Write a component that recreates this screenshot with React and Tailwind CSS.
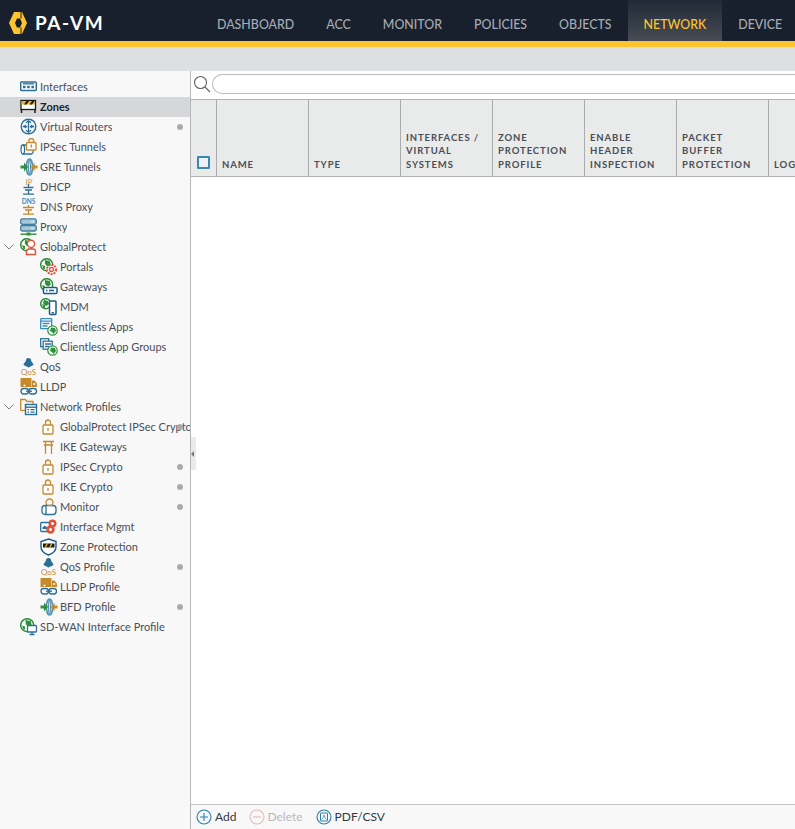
import React from "react";

const B = "#2b6f97", O = "#c8892b", G = "#2f8f3c", R = "#e0523a";
const S = ({ children }) => (
  <svg width="18" height="18" viewBox="0 0 18 18" fill="none" strokeWidth="1.3" className="shrink-0">{children}</svg>
);
const Globe = ({ r = 5.500 }) => (
  <g>
    <circle cx={r + 0.700} cy={r + 0.700} r={r} fill="#fff" stroke={G} strokeWidth="1.500" />
    <path d={`M${r - 1} 2l${r * 0.8} 1 1 ${r * 0.6}-2.500 2-2-1-1.500-2z`} fill={G} />
    <path d={`M2 ${r + 1}l3 1v3l-1.500 0z`} fill={G} />
  </g>
);
const MiniGlobe = () => (
  <g>
    <circle cx="12.500" cy="12.500" r="4.700" fill="#fff" stroke={G} strokeWidth="1.200" />
    <path d="M11 9.500l4 .5 1 3-2.500 3-1.500-2-2-1z" fill={G} />
  </g>
);
const Lock = () => (
  <S>
    <rect x="3" y="7" width="10" height="9" rx="1" stroke={O} fill="#fff" />
    <path d="M5.500 7V4.500a2.500 2.500 0 0 1 5 0V7" stroke={O} />
    <rect x="7.300" y="10" width="1.400" height="2.800" fill={O} />
  </S>
);
const Truck = () => (
  <S>
    <rect x="0.500" y="0" width="11" height="9" rx="0.500" fill={O} />
    <path d="M12 2.500h2.500L17 5.500v3.500h-5z" fill={O} />
    <circle cx="14.200" cy="6" r="1.100" fill="#fff" />
    <circle cx="4.500" cy="7.500" r="1" fill="#fff" />
    <rect x="1" y="10.500" width="7.500" height="5.500" rx="2.700" stroke={B} />
    <rect x="9" y="10.500" width="7.500" height="5.500" rx="2.700" stroke={B} />
    <path d="M6 13.200h6" stroke={B} />
  </S>
);
const Qos = () => (
  <S>
    <path d="M8.500 0a2.600 2.600 0 0 1 2.600 2.600c0 1.400 2.400 2.600 2.400 4.400L8.500 9.500 3.500 7c0-1.800 2.400-3 2.400-4.400A2.600 2.600 0 0 1 8.500 0z" fill={B} />
    <text x="8.500" y="16.500" textAnchor="middle" fontSize="8" fill={O} fontFamily="Lato" fontWeight="400">QoS</text>
  </S>
);
const Bfd = () => (
  <S>
    <ellipse cx="9.500" cy="9" rx="3" ry="8" stroke="#4b93b5" strokeWidth="1.500" fill="#e9f3f6" />
    <ellipse cx="9.500" cy="9" rx="1" ry="7" stroke={B} strokeWidth="0.800" />
    <path d="M0.500 7.600h3.500V4.500L8 9l-4 4.500v-3.100H0.500z" fill={G} />
    <path d="M17.500 7.600h-3V4.500L11 9l3.500 4.500v-3.100h3z" fill={O} />
  </S>
);

const icons = {
  interfaces: (
    <S>
      <rect x="0.700" y="4" width="15.600" height="8.500" rx="1" stroke={B} fill="#fff" strokeWidth="1.500" />
      <path d="M3 5.800h11" stroke={B} />
      <path d="M3 7.800h2.500v2.500H3zM7.200 7.800h2.500v2.500H7.200zM11.400 7.800h2.500v2.500h-2.500z" fill={B} />
    </S>
  ),
  zones: (
    <S>
      <rect x="1" y="2.500" width="14.500" height="9" fill="#fff" stroke="#1b1b1b" strokeWidth="1.300" />
      <rect x="1.500" y="3" width="13.500" height="3.500" fill="#e8b52a" />
      <path d="M4 6.500L6.500 3h2.500L6.500 6.500zM9.500 6.500L12 3h2.500L12 6.500z" fill="#1b1b1b" />
      <path d="M1.500 11v4M15 11v4" stroke="#1b1b1b" strokeWidth="1.500" />
    </S>
  ),
  router: (
    <S>
      <circle cx="8.500" cy="8.500" r="7.300" stroke={B} strokeWidth="1.400" />
      <path d="M8.500 2.800v11.400M6 4.800l2.500-2 2.500 2M6 12.200l2.500 2 2.500-2" stroke={B} />
      <path d="M2.800 8.500h3.500l-1.500-1.500M14.200 8.500h-3.500l1.500-1.500M6.300 8.500l-1.500 1.500M10.700 8.500l1.500 1.500" stroke={B} />
    </S>
  ),
  ipsec: (
    <S>
      <ellipse cx="2.800" cy="11.500" rx="1.800" ry="4.500" stroke={B} fill="#fff" />
      <path d="M2.800 7h9M2.800 16h9a2 4 0 0 0 1.500-3.500" stroke={B} />
      <rect x="6.500" y="4.500" width="9.500" height="7.500" rx="1" stroke={O} fill="#fff" />
      <path d="M8.800 4.500V3a2.500 2.500 0 0 1 5 0v1.500" stroke={O} />
      <rect x="10.600" y="6.500" width="1.500" height="3" fill={O} />
    </S>
  ),
  gre: <Bfd />,
  dhcp: (
    <S>
      <text x="9" y="6.500" textAnchor="middle" fontSize="7.500" fill="#d8a968" fontFamily="Lato" fontWeight="700">IP</text>
      <path d="M8.500 6v3.500M3.500 9.500h10M5 12h7M8.500 12v4M3 16.200h11" stroke={B} />
    </S>
  ),
  dns: (
    <S>
      <text x="8.500" y="6" textAnchor="middle" fontSize="6.500" fill="#3a8cbf" fontFamily="Lato" fontWeight="700">DNS</text>
      <path d="M8.500 7v2.500M3 9.500h11M5 12h7M8.500 12v4M3 16.200h11" stroke={O} />
    </S>
  ),
  proxy: (
    <S>
      <rect x="0.700" y="0.800" width="15.600" height="5.500" rx="1.800" fill="#a9c7d6" stroke="#3f7f9f" />
      <rect x="0.700" y="7.500" width="15.600" height="5.500" rx="1.800" fill="#a9c7d6" stroke="#3f7f9f" />
      <path d="M0.500 16.200h16" stroke={G} strokeWidth="1.400" />
      <rect x="6.500" y="14.500" width="4" height="3" fill={G} />
      <path d="M11 3.500h3M11 10h3" stroke="#d8e6ec" />
    </S>
  ),
  gp: (
    <S>
      <Globe r={6} />
      <circle cx="11" cy="5.800" r="3.600" stroke={R} strokeWidth="1.400" fill="#fff" />
      <path d="M6.500 16.500v-3a2.500 2.500 0 0 1 2.500-2.500h4a2.500 2.500 0 0 1 2.500 2.500v3z" stroke={R} strokeWidth="1.400" fill="#fff" />
    </S>
  ),
  portals: (
    <S>
      <Globe r={6} />
      <circle cx="11.500" cy="11.500" r="4.600" stroke={R} strokeWidth="2" strokeDasharray="2 1" fill="#fff" />
      <circle cx="11.500" cy="11.500" r="2" stroke={R} />
    </S>
  ),
  gateways: (
    <S>
      <Globe r={6} />
      <rect x="3.500" y="9.500" width="13.500" height="6" rx="1" stroke="#1d5c86" strokeWidth="1.500" fill="#fff" />
      <path d="M6 12.500h1.500M9 12.500h5" stroke="#1d5c86" strokeWidth="1.500" />
    </S>
  ),
  mdm: (
    <S>
      <Globe r={5} />
      <rect x="9.500" y="3" width="6.500" height="13.500" rx="1" stroke="#1d5c86" strokeWidth="1.500" fill="#fff" />
      <path d="M11.500 14.800h2.500" stroke="#1d5c86" />
    </S>
  ),
  apps: (
    <S>
      <rect x="0.700" y="0.700" width="11" height="10" rx="0.500" stroke="#3a8cbf" fill="#fff" />
      <path d="M0.700 3.200h11M2.500 5.500h7M2.500 8h5" stroke="#3a8cbf" />
      <MiniGlobe />
    </S>
  ),
  groups: (
    <S>
      <rect x="0.700" y="0.700" width="8" height="8" stroke={B} fill="#fff" />
      <rect x="3.200" y="3.200" width="9" height="8" stroke={B} fill="#fff" />
      <path d="M5 6h6M5 8.500h4" stroke={B} />
      <MiniGlobe />
    </S>
  ),
  np: (
    <S>
      <path d="M0.700 12.500V1.500h4.500l1.800 2h6v3" stroke={O} />
      <path d="M0.700 12.500H5" stroke={O} />
      <rect x="5.500" y="6.500" width="11" height="10" stroke={B} fill="#fff" strokeWidth="1.400" />
      <path d="M5.500 9.200h11" stroke={B} strokeWidth="1.400" />
      <path d="M7.500 11.700h1.500M10.500 11.700h4M7.500 14.200h1.500M10.500 14.200h4" stroke={B} />
    </S>
  ),
  lock: <Lock />,
  ike: (
    <S>
      <path d="M3 3.500h11M4 7h9M5.500 3.500V16M11.500 3.500V16" stroke={O} />
    </S>
  ),
  monitor: (
    <S>
      <circle cx="9.500" cy="4.500" r="3.500" stroke={O} />
      <rect x="2" y="7.500" width="14" height="9" rx="3" stroke={B} fill="#fff" />
      <path d="M6 7.500v9" stroke={B} />
      <path d="M7 7.500h5.500" stroke={O} />
    </S>
  ),
  mgmt: (
    <S>
      <rect x="0.700" y="4.500" width="9" height="9" rx="1" stroke={B} fill="#fff" />
      <path d="M2.500 11h4.500V9.500L4.700 7.500 2.500 9.500z" fill={B} />
      <circle cx="12.500" cy="5.500" r="4" fill={R} />
      <circle cx="10.500" cy="11.500" r="4.200" fill={R} />
      <circle cx="12.500" cy="5.500" r="1.500" fill="#fff" />
      <circle cx="10.500" cy="11.500" r="1.500" fill="#fff" />
    </S>
  ),
  zp: (
    <S>
      <path d="M8.500 1l7.500 2.500V9c0 4-3.500 6.500-7.500 8-4-1.500-7.500-4-7.500-8V3.500z" stroke="#1d5c86" strokeWidth="1.400" fill="#fff" />
      <rect x="3" y="5.500" width="11.500" height="4" fill="#1b1b1b" />
      <path d="M4.500 9.500l2-4H8l-2 4zM9 9.500l2-4h1.500l-2 4z" fill="#e8b52a" />
    </S>
  ),
  qos: <Qos />,
  truck: <Truck />,
  sdwan: (
    <S>
      <Globe r={6.500} />
      <rect x="7.500" y="7.500" width="9" height="6.500" rx="1" stroke={B} fill="#fff" />
      <path d="M12 14v2M9.500 16.500h5" stroke={B} />
    </S>
  ),
};

const tree = [
  { l: "Interfaces", i: "interfaces" },
  { l: "Zones", i: "zones", sel: true },
  { l: "Virtual Routers", i: "router", dot: true },
  { l: "IPSec Tunnels", i: "ipsec" },
  { l: "GRE Tunnels", i: "gre" },
  { l: "DHCP", i: "dhcp" },
  { l: "DNS Proxy", i: "dns" },
  { l: "Proxy", i: "proxy" },
  { l: "GlobalProtect", i: "gp", open: true },
  { l: "Portals", i: "portals", c: true },
  { l: "Gateways", i: "gateways", c: true },
  { l: "MDM", i: "mdm", c: true },
  { l: "Clientless Apps", i: "apps", c: true },
  { l: "Clientless App Groups", i: "groups", c: true },
  { l: "QoS", i: "qos" },
  { l: "LLDP", i: "truck" },
  { l: "Network Profiles", i: "np", open: true },
  { l: "GlobalProtect IPSec Crypto", i: "lock", c: true, dot: true },
  { l: "IKE Gateways", i: "ike", c: true },
  { l: "IPSec Crypto", i: "lock", c: true, dot: true },
  { l: "IKE Crypto", i: "lock", c: true, dot: true },
  { l: "Monitor", i: "monitor", c: true, dot: true },
  { l: "Interface Mgmt", i: "mgmt", c: true },
  { l: "Zone Protection", i: "zp", c: true },
  { l: "QoS Profile", i: "qos", c: true, dot: true },
  { l: "LLDP Profile", i: "truck", c: true },
  { l: "BFD Profile", i: "gre", c: true, dot: true },
  { l: "SD-WAN Interface Profile", i: "sdwan" },
];

const tabs = ["DASHBOARD", "ACC", "MONITOR", "POLICIES", "OBJECTS", "NETWORK", "DEVICE"];

const cols = [
  ["NAME"],
  ["TYPE"],
  ["INTERFACES /", "VIRTUAL", "SYSTEMS"],
  ["ZONE", "PROTECTION", "PROFILE"],
  ["ENABLE", "HEADER", "INSPECTION"],
  ["PACKET", "BUFFER", "PROTECTION"],
  ["LOG SETTING"],
];

function Row({ l, i, sel, dot, c, open }) {
  return (
    <div className={`relative flex h-5 items-center whitespace-nowrap ${c ? "pl-[40px]" : "pl-[20px]"} ${sel ? "bg-[#d6d7d8]" : ""}`}>
      {open && (
        <svg width="10" height="6" viewBox="0 0 10 6" fill="none" className="absolute left-[4px] top-[7px]">
          <path d="M0.500 0.500L5 5l4.500-4.500" stroke="#7a7f85" strokeWidth="1" />
        </svg>
      )}
      {icons[i]}
      <span className={`ml-[2px] overflow-hidden text-[11px] leading-5 ${sel ? "font-bold text-[#1c2430]" : "text-[#4a4f57]"} ${c ? "w-[130px]" : ""}`}>{l}</span>
      {dot && <span className="absolute left-[177px] top-[7px] h-[6px] w-[6px] rounded-full bg-[#a9abae]" />}
    </div>
  );
}

export default function App() {
  return (
    <div className="flex h-[829px] w-[795px] flex-col overflow-hidden bg-white font-['Lato',sans-serif]">
      <header className="flex h-[41px] shrink-0 items-stretch bg-[#18202d]">
        <div className="flex w-[201px] shrink-0 items-center pl-[9px] pt-[4px]">
          <svg width="18" height="22" viewBox="0 0 18 22" className="mr-[8px]">
            <path d="M5 0h8l5 11-5 11H5L0 11z" fill="#fec42f" />
            <path d="M8 6.500h3L13 11l-2 4.500H8L6 11z" fill="#18202d" />
            <path d="M11.500 0h1v6.500h-1zM11.500 15.500h1V22h-1z" fill="#18202d" />
          </svg>
          <span className="text-[19px] font-bold leading-none tracking-[1.500px] text-white">PA-VM</span>
        </div>
        <nav className="flex shrink-0">
          {tabs.map((t) => (
            <div
              key={t}
              className={`flex items-center px-4 pt-[9px] text-[12.4px] font-medium ${
                t === "NETWORK" ? "bg-gradient-to-b from-[#222a37] to-[#474c54] text-[#fec42f]" : "text-[#a5abb3]"
              }`}
            >
              {t}
            </div>
          ))}
        </nav>
      </header>
      <div className="h-[6px] shrink-0 bg-[#fec42f]" />
      <div className="h-[24px] shrink-0 bg-[#dedfe1]" />
      <div className="flex min-h-0 flex-1">
        <aside className="w-[191px] shrink-0 overflow-hidden border-r border-[#b5b7ba] bg-[#f8f8f8] pt-[6px]">
          {tree.map((r) => (
            <Row key={r.l + r.i} {...r} />
          ))}
        </aside>
        <main className="relative flex min-w-0 flex-1 flex-col">
          <div className="absolute left-0 top-[366px] flex h-[33px] w-[5px] items-center rounded-r-[2px] bg-[#e9eaeb]">
            <span className="h-0 w-0 border-y-[3px] border-r-[3px] border-y-transparent border-r-[#777]" />
          </div>
          <div className="flex h-[28px] shrink-0 items-start pl-[2px] pt-[3px]">
            <svg width="18" height="18" viewBox="0 0 18 18" fill="none" className="mt-[1px] shrink-0">
              <circle cx="7.500" cy="7.500" r="6" stroke="#5d6267" strokeWidth="1.100" />
              <path d="M12 12l5 5" stroke="#5d6267" strokeWidth="1.100" />
            </svg>
            <div className="ml-[1px] h-[20px] flex-1 rounded-l-[10px] border border-r-0 border-[#b9bbbe] bg-white" />
          </div>
          <div className="flex h-[78px] shrink-0 border-y border-[#b1b3b6] bg-[#e9eaea]">
            <div className="flex w-[26px] shrink-0 items-end border-r border-[#a9abae] pb-[7px] pl-[6px]">
              <span className="block h-[13px] w-[13px] rounded-[1px] border-2 border-[#3c88b5] bg-[#eef1f3]" />
            </div>
            {cols.map((c) => (
              <div key={c[0]} className="flex w-[92px] shrink-0 flex-col justify-end whitespace-nowrap border-r border-[#a9abae] pb-[5px] pl-[5px] text-[9.500px] font-bold leading-[13.500px] tracking-[0.900px] text-[#4a4f57]">
                {c.map((x) => (
                  <div key={x}>{x}</div>
                ))}
              </div>
            ))}
          </div>
          <div className="flex-1 bg-white" />
          <div className="flex h-[25px] shrink-0 items-center border-t border-[#c4c6c8] bg-[#f8f8f8] pl-[6px] text-[12px]">
            <svg width="16" height="16" viewBox="0 0 16 16" fill="none" className="mr-[3px] -ml-[1px]">
              <circle cx="8" cy="8" r="7" stroke="#2b7fa9" strokeWidth="1.100" />
              <path d="M8 4v8M4 8h8" stroke="#2b7fa9" strokeWidth="1.100" />
            </svg>
            <span className="text-[#33383f]">Add</span>
            <svg width="16" height="16" viewBox="0 0 16 16" fill="none" className="ml-[13px] mr-[2px]">
              <circle cx="8" cy="8" r="7" stroke="#e5b9b6" strokeWidth="1.100" />
              <path d="M4 8h8" stroke="#e5b9b6" strokeWidth="1.100" />
            </svg>
            <span className="text-[#b7b9bb]">Delete</span>
            <svg width="16" height="16" viewBox="0 0 16 16" fill="none" className="ml-[13px] mr-[3px]">
              <circle cx="8" cy="8" r="7" stroke="#2b7fa9" strokeWidth="1.100" />
              <rect x="4.500" y="4" width="7" height="8" rx="0.500" stroke="#2b7fa9" />
              <path d="M5.500 10.500c2-1 2-3 2.500-4.500.5 1.500 1 3 2.500 4.500" stroke="#2b7fa9" strokeWidth="0.700" />
            </svg>
            <span className="text-[#33383f]">PDF/CSV</span>
          </div>
        </main>
      </div>
    </div>
  );
}
